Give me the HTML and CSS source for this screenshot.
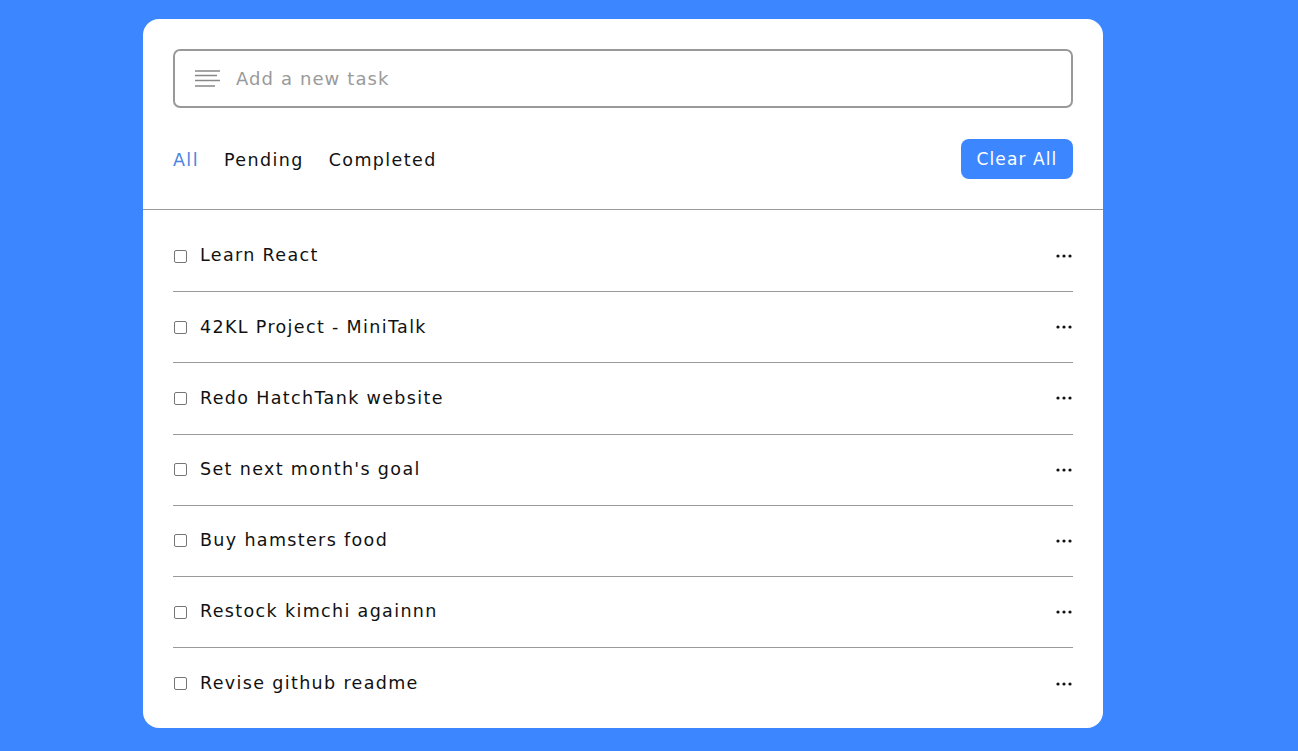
FILE: index.html
```html
<!DOCTYPE html>
<html>
<head>
<meta charset="utf-8">
<link rel="stylesheet" href="styles.css">
</head>
<body>
<div class="card">
  <div class="top">
    <div class="task-input">
      <svg class="notes" width="26" height="18" viewBox="0 0 26 18"><path d="M0 1h25M0 5.5h22M0 10.5h25M0 16h20" stroke="#888" stroke-width="1.6" fill="none"/></svg>
      <input type="text" placeholder="Add a new task">
    </div>
    <div class="controls">
      <div class="filters">
        <span class="filter active">All</span>
        <span class="filter">Pending</span>
        <span class="filter">Completed</span>
      </div>
      <button class="clear-btn">Clear All</button>
    </div>
  </div>
  <ul class="task-box">
    <li class="task"><label><input type="checkbox"><span>Learn React</span></label><svg class="dots" width="16" height="4" viewBox="0 0 16 4"><circle cx="2" cy="2" r="1.6"/><circle cx="8" cy="2" r="1.6"/><circle cx="14" cy="2" r="1.6"/></svg></li>
    <li class="task"><label><input type="checkbox"><span>42KL Project - MiniTalk</span></label><svg class="dots" width="16" height="4" viewBox="0 0 16 4"><circle cx="2" cy="2" r="1.6"/><circle cx="8" cy="2" r="1.6"/><circle cx="14" cy="2" r="1.6"/></svg></li>
    <li class="task"><label><input type="checkbox"><span>Redo HatchTank website</span></label><svg class="dots" width="16" height="4" viewBox="0 0 16 4"><circle cx="2" cy="2" r="1.6"/><circle cx="8" cy="2" r="1.6"/><circle cx="14" cy="2" r="1.6"/></svg></li>
    <li class="task"><label><input type="checkbox"><span>Set next month's goal</span></label><svg class="dots" width="16" height="4" viewBox="0 0 16 4"><circle cx="2" cy="2" r="1.6"/><circle cx="8" cy="2" r="1.6"/><circle cx="14" cy="2" r="1.6"/></svg></li>
    <li class="task"><label><input type="checkbox"><span>Buy hamsters food</span></label><svg class="dots" width="16" height="4" viewBox="0 0 16 4"><circle cx="2" cy="2" r="1.6"/><circle cx="8" cy="2" r="1.6"/><circle cx="14" cy="2" r="1.6"/></svg></li>
    <li class="task"><label><input type="checkbox"><span>Restock kimchi againnn</span></label><svg class="dots" width="16" height="4" viewBox="0 0 16 4"><circle cx="2" cy="2" r="1.6"/><circle cx="8" cy="2" r="1.6"/><circle cx="14" cy="2" r="1.6"/></svg></li>
    <li class="task"><label><input type="checkbox"><span>Revise github readme</span></label><svg class="dots" width="16" height="4" viewBox="0 0 16 4"><circle cx="2" cy="2" r="1.6"/><circle cx="8" cy="2" r="1.6"/><circle cx="14" cy="2" r="1.6"/></svg></li>
  </ul>
</div>
</body>
</html>
```

FILE: styles.css
```css
* { box-sizing: border-box; }
html, body { margin: 0; padding: 0; }
body {
  background: #3c87ff;
  font-family: "DejaVu Sans", "Open Sans", sans-serif;
  padding: 19px 0 24px 143px;
  min-height: 100vh;
}
.card {
  width: 960px;
  background: #fff;
  border-radius: 16px;
}
.top {
  padding: 30px 30px 0;
  border-bottom: 1px solid #999;
}
.task-input {
  height: 59px;
  border: 2px solid #999;
  border-radius: 7px;
  display: flex;
  align-items: center;
  padding-left: 20px;
}
.notes { flex: none; margin-top: 1px; }
.task-input input {
  border: none;
  outline: none;
  font: inherit;
  font-size: 18px;
  letter-spacing: 1.1px;
  margin-left: 13px;
  flex: 1;
  color: #333;
  background: transparent;
}
.task-input input::placeholder { color: #9a9a9a; }
.controls {
  display: flex;
  align-items: center;
  justify-content: space-between;
  padding: 31px 0 30px;
}
.filters { display: flex; gap: 25px; margin-top: 2px; }
.filter { font-size: 17.5px; letter-spacing: 1.4px; color: #111; }
.filter.active { color: #4a86e0; }
.clear-btn {
  background: #3c87ff;
  color: #fff;
  border: none;
  border-radius: 8px;
  font: inherit;
  font-size: 17px;
  letter-spacing: 1.1px;
  width: 112px;
  height: 40px;
  padding: 0;
}
.task-box {
  list-style: none;
  margin: 0;
  padding: 11px 30px 9px;
}
.task {
  height: 71.2px;
  display: flex;
  align-items: center;
  justify-content: space-between;
  border-bottom: 1px solid #999;
}
.task:last-child { border-bottom: none; height: 71px; }
.task label { display: flex; align-items: center; }
.task input[type=checkbox] {
  appearance: none;
  width: 13px;
  height: 13px;
  border: 1px solid #767676;
  border-radius: 2px;
  margin: 0 13px 0 1px;
}
.task span { font-size: 17.5px; letter-spacing: 1.35px; color: #111; line-height: 1; }
.dots { fill: #111; margin-right: 1px; }
```
